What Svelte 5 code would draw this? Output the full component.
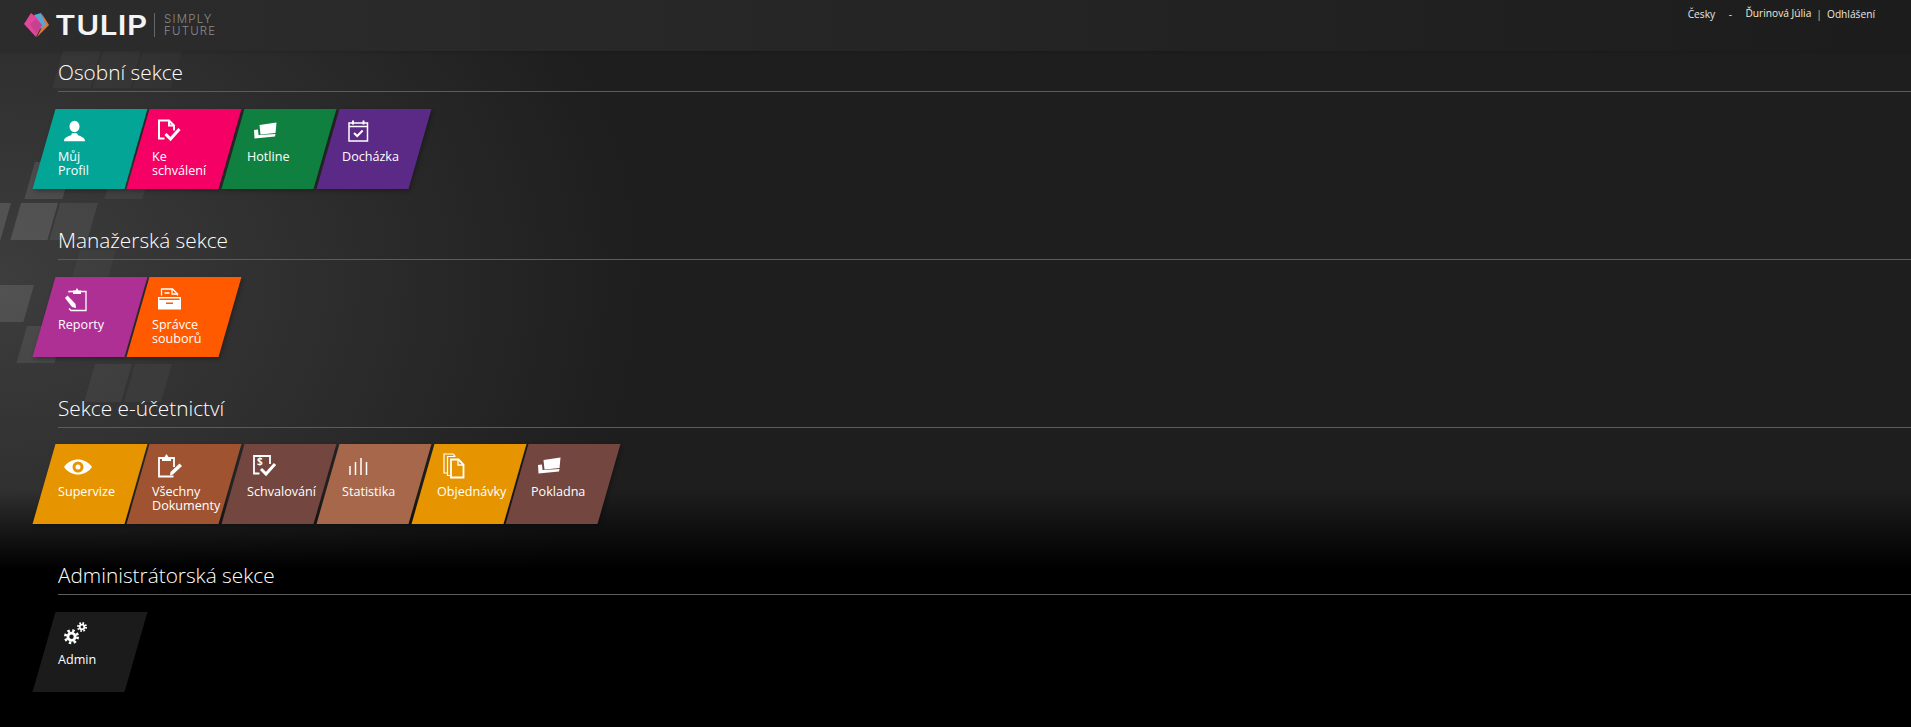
<script>
	const sections = [
		{
			title: 'Osobní sekce',
			tiles: [
				{ lines: ['Můj', 'Profil'], color: 'teal', icon: 'person' },
				{ lines: ['Ke', 'schválení'], color: 'pink', icon: 'approve' },
				{ lines: ['Hotline'], color: 'green', icon: 'cash' },
				{ lines: ['Docházka'], color: 'purple', icon: 'calendar' }
			]
		},
		{
			title: 'Manažerská sekce',
			tiles: [
				{ lines: ['Reporty'], color: 'magenta', icon: 'report' },
				{ lines: ['Správce', 'souborů'], color: 'orange', icon: 'files' }
			]
		},
		{
			title: 'Sekce e-účetnictví',
			tiles: [
				{ lines: ['Supervize'], color: 'amber', icon: 'eye' },
				{ lines: ['Všechny', 'Dokumenty'], color: 'brown', icon: 'clipboard' },
				{ lines: ['Schvalování'], color: 'umber', icon: 'money' },
				{ lines: ['Statistika'], color: 'tan', icon: 'bars' },
				{ lines: ['Objednávky'], color: 'amber', icon: 'docs' },
				{ lines: ['Pokladna'], color: 'umber', icon: 'cash' }
			]
		},
		{
			title: 'Administrátorská sekce',
			tiles: [{ lines: ['Admin'], color: 'dark', icon: 'gears' }]
		}
	];

	// faint slanted squares behind the page, left side: x, y, w, h, alpha
	const squares = [
		[35, 162, 38, 37, 0.1], [115, 162, 38, 37, 0.05],
		[-27, 203, 38, 37, 0.13], [21, 203, 37, 37, 0.13], [60, 203, 38, 37, 0.07],
		[-4, 285, 38, 37, 0.11], [27, 326, 38, 37, 0.08],
		[80, 250, 36, 35, 0.03],
		[95, 364, 37, 38, 0.05], [135, 364, 37, 38, 0.04],
		[63, 51, 38, 37, 0.035], [103, 51, 38, 37, 0.03], [143, 51, 39, 37, 0.02]
	];

	function squarePoints([x, y, w, h]) {
		const slant = h * 0.287;
		return `${x},${y} ${x + w},${y} ${x + w - slant},${y + h} ${x - slant},${y + h}`;
	}
</script>

{#snippet icon(name)}
	<svg class="icon" viewBox="0 0 30 26" width="30" height="26" aria-hidden="true">
		{#if name === 'person'}
			<ellipse cx="10.5" cy="8.500" rx="5" ry="5.800" fill="#fff" />
			<path d="M0 23.300c0-3.500 3-4.500 7-6l1-2h5l1 2c4 1.500 7 2.500 7 6z" fill="#fff" />
		{:else if name === 'approve'}
			<path d="M6.500 20.500H1V2.500h10l5 5v5M11 2.500v5h5" fill="none" stroke="#fff" stroke-width="2" />
			<path d="M7.500 16l5 5 9-10" fill="none" stroke="#fff" stroke-width="3" />
		{:else if name === 'cash'}
			<path d="M6.500 7l17-2.500-1 10.500-15 1.500z" fill="#fff" />
			<path d="M1 12l4-.5.500 5.500 17-1-.5 2.500-20.500 2z" fill="#fff" />
		{:else if name === 'calendar'}
			<path d="M1 5h18.500v18H1z" fill="none" stroke="#fff" stroke-width="1.500" />
			<path d="M1 8.500h18.500" stroke="#fff" stroke-width="1.500" />
			<path d="M5 2.500v4M15.500 2.500v4" stroke="#fff" stroke-width="2" />
			<path d="M6 15l3.200 3 5.500-5.500" fill="none" stroke="#fff" stroke-width="2" />
		{:else if name === 'report'}
			<path d="M5 6.500v-1h17v19H7l-2-2" fill="none" stroke="#fff" stroke-width="1.300" />
			<path d="M9 8V4.500h2.500l1.500-2.500 1.500 2.500H17V8z" fill="#fff" />
			<path d="M1 12l2.500-2.500 8 8.500.5 4-4-1z" fill="#fff" />
		{:else if name === 'files'}
			<path d="M3.500 9.500V3h11l5 5v1.500" fill="none" stroke="#fff" stroke-width="1.300" />
			<path d="M14 3v5h5.500M6.500 7h5" fill="none" stroke="#fff" stroke-width="1.300" />
			<path d="M.7 11.700h21.600v11H.7z" fill="none" stroke="#fff" stroke-width="1.400" />
			<path d="M0 14h23v9H0zM8 16.500v1.500h7v-1.500z" fill="#fff" fill-rule="evenodd" />
		{:else if name === 'eye'}
			<path fill-rule="evenodd" fill="#fff" d="M0 14C4 8.500 9 6.500 14 6.500S24 8.500 28 14c-4 5.500-9 7.500-14 7.500S4 19.500 0 14zm14-5.500a5.500 5.500 0 1 0 0 11 5.500 5.500 0 0 0 0-11zm0 3a2.500 2.500 0 1 1 0 5 2.500 2.500 0 0 1 0-5z" />
		{:else if name === 'clipboard'}
			<path d="M4 5H1v18.500h14.500M16 14V5h-3" fill="none" stroke="#fff" stroke-width="1.800" />
			<path d="M4 8V4h2.500L8.500 1l2 3H13v4z" fill="#fff" />
			<path d="M12 22.500l.5-3.500 9-8.500 2.500 2.500-9 8.500z" fill="#fff" />
		{:else if name === 'money'}
			<path d="M6.500 20.500H1V3h16v8" fill="none" stroke="#fff" stroke-width="1.800" />
			<text x="4" y="12" class="dollar">$</text>
			<path d="M8 16l5 5 9-10" fill="none" stroke="#fff" stroke-width="3" />
		{:else if name === 'bars'}
			<path d="M2 13v9M7.500 9v13M13 5v17M18.500 9v13" stroke="#fff" stroke-width="1.500" />
		{:else if name === 'docs'}
			<path d="M5 20H1V1h9l2 2" fill="none" stroke="#fff" stroke-width="1.200" />
			<path d="M8 22.500H4.500V3.500h8" fill="none" stroke="#fff" stroke-width="1.200" />
			<path d="M8 6.500h7.500l5 5v13H8z" fill="none" stroke="#fff" stroke-width="1.800" />
			<path d="M15 6.500v5.500h5.500" fill="none" stroke="#fff" stroke-width="1.300" />
		{:else if name === 'gears'}
			<circle cx="7.500" cy="15.700" r="3.600" fill="none" stroke="#fff" stroke-width="2.800" />
			<circle cx="7.500" cy="15.700" r="6.100" fill="none" stroke="#fff" stroke-width="2.800" stroke-dasharray="2.400 2.390" />
			<circle cx="18" cy="6" r="2.300" fill="none" stroke="#fff" stroke-width="1.800" />
			<circle cx="18" cy="6" r="4" fill="none" stroke="#fff" stroke-width="2" stroke-dasharray="1.600 1.540" />
		{/if}
	</svg>
{/snippet}

<div class="page">
	<svg class="squares" width="200" height="420" aria-hidden="true">
		{#each squares as square}
			<polygon points={squarePoints(square)} fill-opacity={square[4]} />
		{/each}
	</svg>

	<header>
		<div class="logo">
			<svg viewBox="0 0 26 25" width="26" height="25" aria-hidden="true">
				<path d="M18 1l7 11-12 12 6-12z" fill="#e0733a" />
				<path d="M10 2l7-2 5 12-6 4z" fill="#57a7d6" />
				<path d="M0 11L7 0l6 5 5 7-6 12z" fill="#e0489c" />
				<path d="M6 11l6-5 6 6-6 9z" fill="#c9408f" />
			</svg>
			<span class="brand">TULIP</span>
			<span class="claim">SIMPLY<br />FUTURE</span>
		</div>
		<nav>
			<span class="lang">Česky</span>
			<span class="dash">-</span>
			<span class="user">Ďurinová Júlia</span>
			<span class="sep">|</span>
			<span>Odhlášení</span>
		</nav>
	</header>

	<main>
		{#each sections as section}
			<section>
				<h2>{section.title}</h2>
				<div class="tiles">
					{#each section.tiles as tile}
						<div class="tile {tile.color}">
							<div class="content">
								{@render icon(tile.icon)}
								<div class="label">
									{#each tile.lines as line}
										<div>{line}</div>
									{/each}
								</div>
							</div>
						</div>
					{/each}
				</div>
			</section>
		{/each}
	</main>
</div>

<style>
	:global(body) {
		background: #000;
	}

	.page {
		position: relative;
		height: 727px;
		overflow: hidden;
		font-family: "Open Sans", "Liberation Sans", sans-serif;
		color: #fff;
		background:
			linear-gradient(to bottom, transparent 490px, #000 570px),
			radial-gradient(ellipse 640px 520px at 0 280px, #3d3d3d, #1e1e1e);
	}

	.squares {
		position: absolute;
		left: 0;
		top: 0;
	}

	.squares polygon {
		fill: #fff;
	}

	header {
		position: relative;
		height: 51px;
		display: flex;
		justify-content: space-between;
		background: linear-gradient(to right, #2c2c2c, #282828 30%, #1c1c1c);
		box-shadow: 0 1px 3px rgba(0, 0, 0, 0.15);
	}

	.logo {
		display: flex;
		align-items: center;
		padding-left: 24px;
		height: 50px;
	}

	.brand {
		display: inline-block;
		width: 99px;
		margin-left: 5px;
		font-family: "Inter", sans-serif;
		font-size: 27px;
		font-weight: 600;
		letter-spacing: 0.4px;
		color: #f4f4f4;
		transform: scaleX(1.16);
		transform-origin: left center;
	}

	.claim {
		padding-left: 9px;
		border-left: 1px solid #666;
		font-family: "Inter", sans-serif;
		font-weight: 300;
		font-size: 11.500px;
		line-height: 12px;
		letter-spacing: 1.200px;
		color: #8a8a8a;
	}

	nav {
		display: flex;
		padding: 6px 36px 0 0;
		font-size: 10.200px;
		line-height: 16px;
		color: #e8e8e8;
	}

	.dash {
		margin: 0 13.500px;
	}

	.user {
		margin-top: -1px;
		color: #f5ecd0;
	}

	.sep {
		margin: 0 5px;
		color: #e8c878;
	}

	main {
		position: relative;
		padding-top: 8.400px;
	}

	section {
		height: 167.600px;
	}

	h2 {
		margin: 0 0 0 58px;
		height: 33px;
		box-sizing: border-box;
		border-bottom: 1px solid #5c5c5c;
		font-size: 20.800px;
		font-weight: 300;
		line-height: 26px;
		color: #fff;
	}

	.tiles {
		display: flex;
		gap: 3px;
		margin: 16.600px 0 0 43.500px;
	}

	.tile {
		width: 91.800px;
		height: 80px;
		transform: skewX(-16deg);
		box-shadow: 2px 2px 4px rgba(0, 0, 0, 0.3);
	}

	.content {
		height: 100%;
		padding: 9px 0 0 14px;
		box-sizing: border-box;
		transform: skewX(16deg);
	}

	.icon {
		display: block;
		margin-left: 6px;
		overflow: visible;
	}

	.dollar {
		font-size: 10px;
		font-weight: 700;
		fill: #fff;
	}

	.label {
		margin-top: 6px;
		font-size: 12.600px;
		line-height: 14px;
		white-space: nowrap;
	}

	.teal { background: #03a597; }
	.pink { background: #f50064; }
	.green { background: #0f8040; }
	.purple { background: #5a2a86; }
	.magenta { background: #ae3094; }
	.orange { background: #ff5a00; }
	.amber { background: #e69500; }
	.brown { background: #a05330; }
	.umber { background: #734640; }
	.tan { background: #a6674b; }
	.dark { background: #1b1b1b; }
</style>
